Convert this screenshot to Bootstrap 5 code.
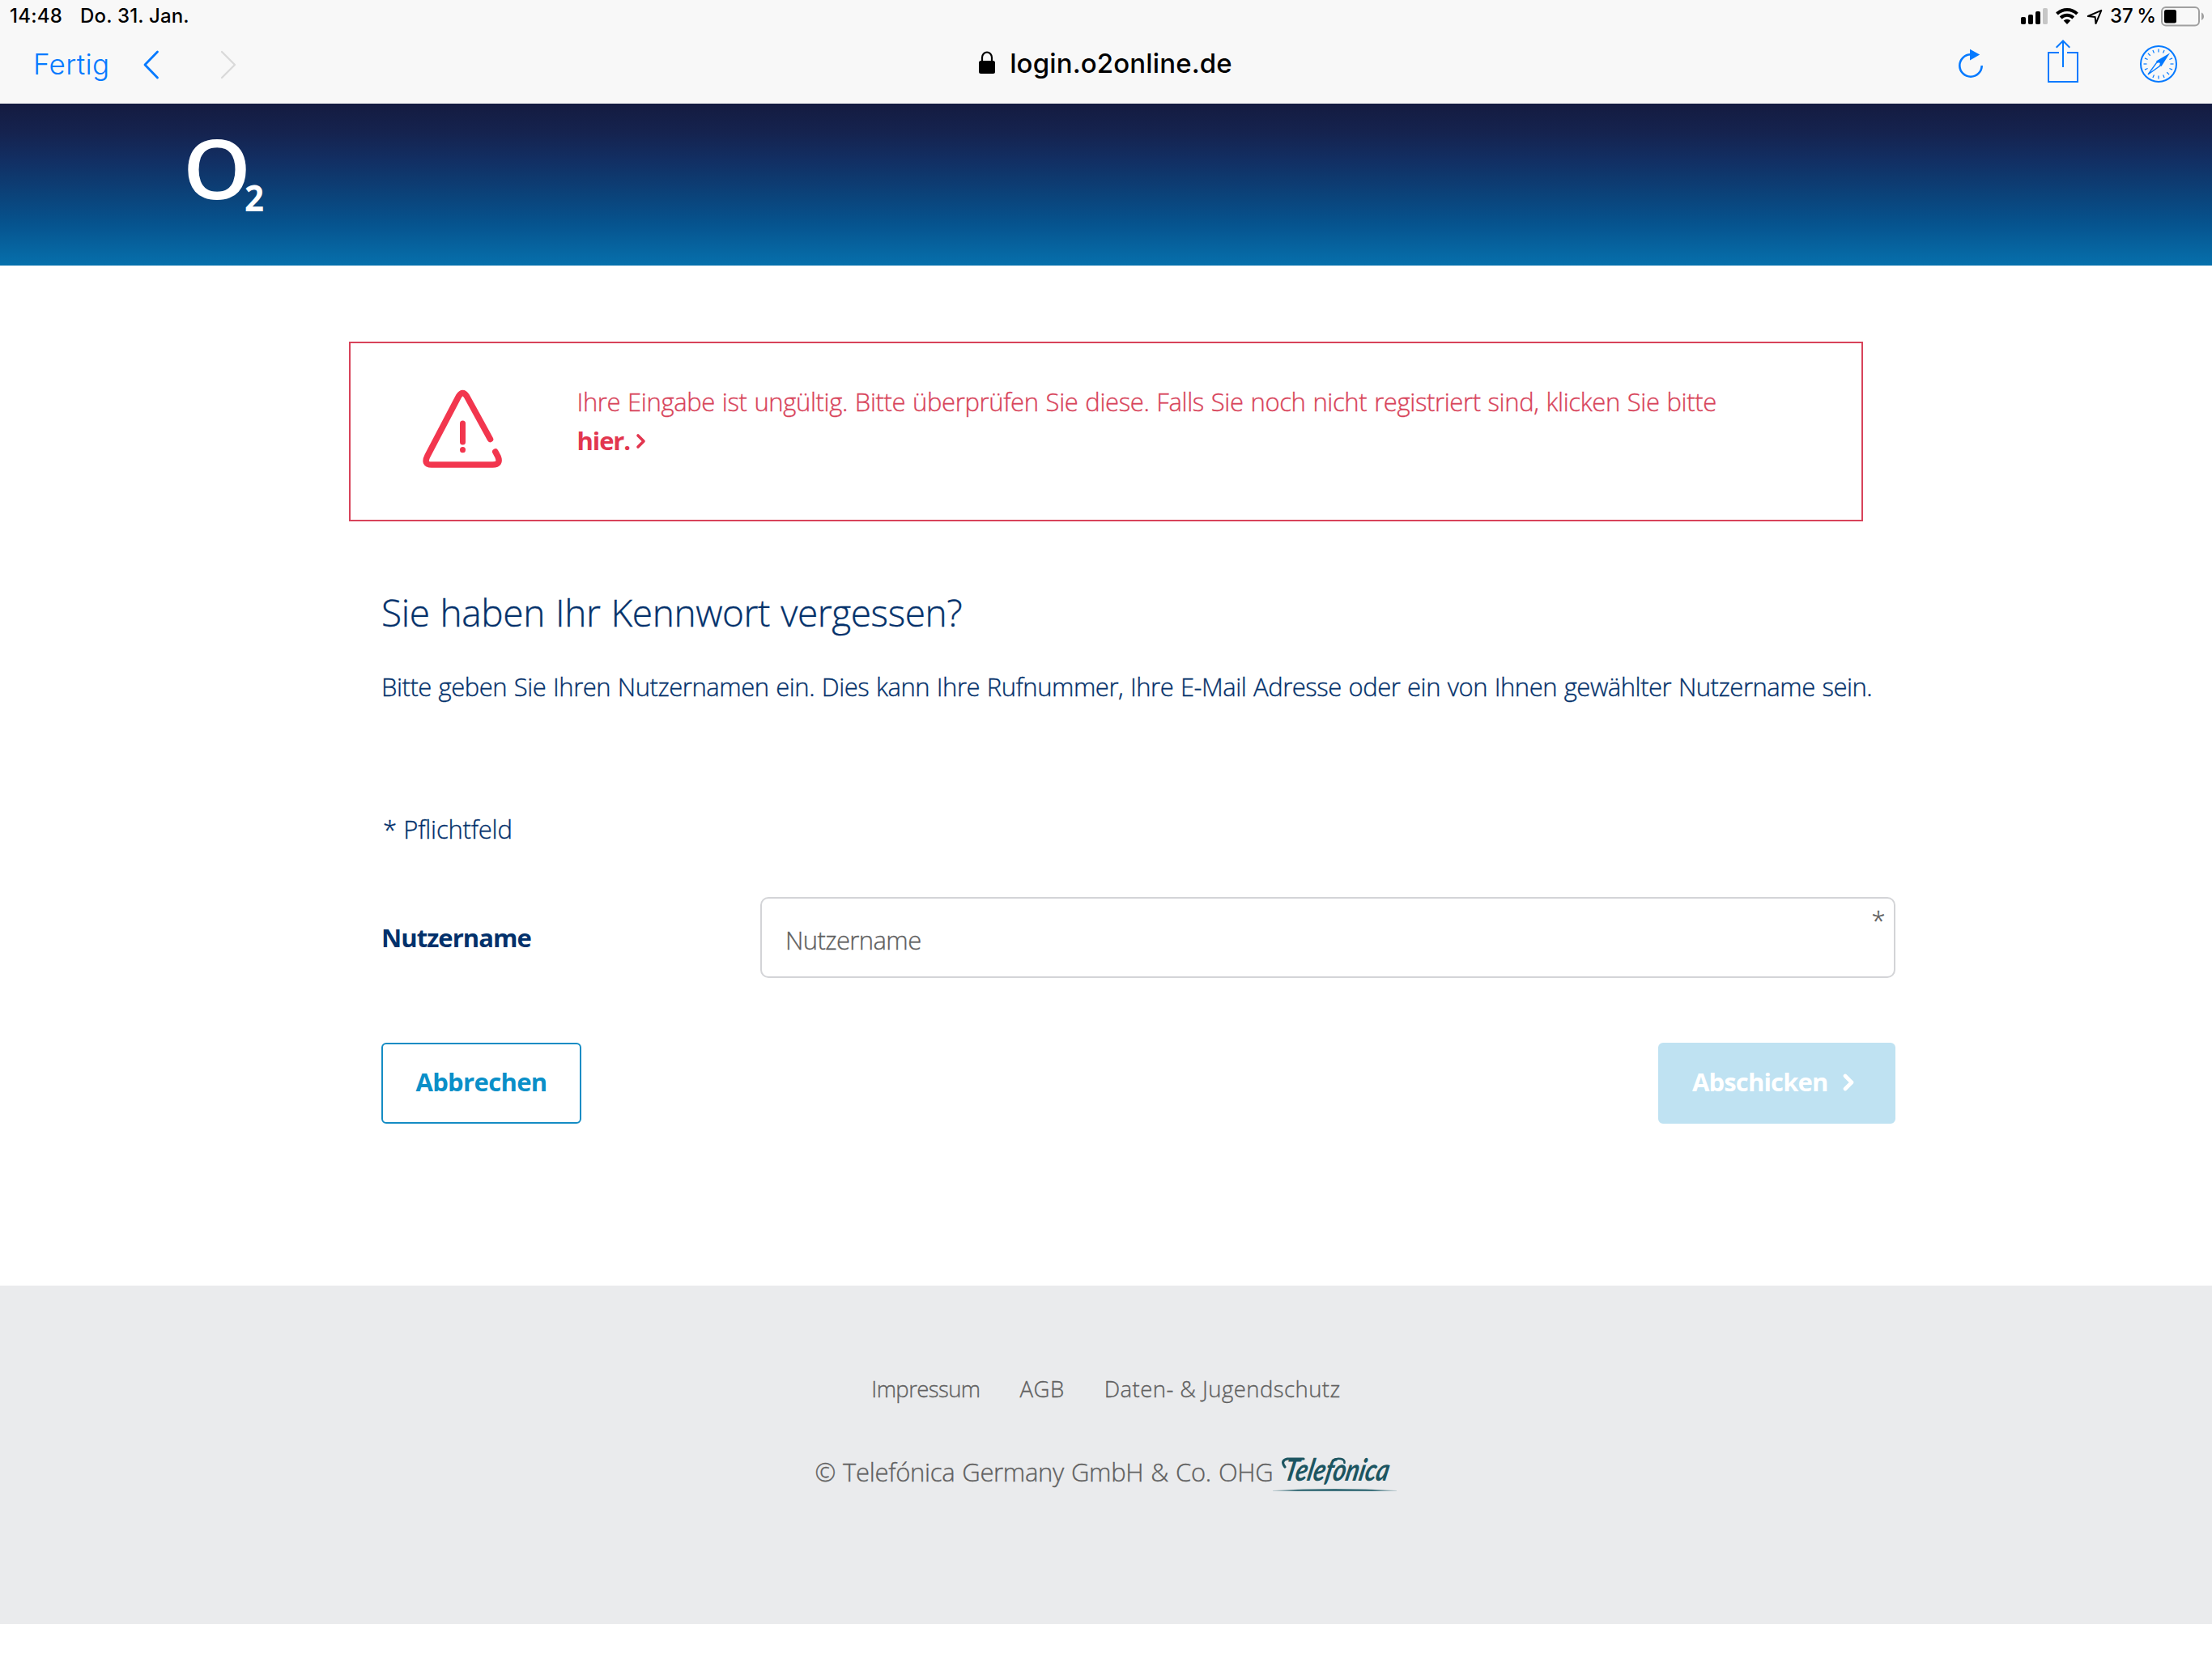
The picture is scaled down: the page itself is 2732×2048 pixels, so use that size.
<!doctype html>
<html lang="de">
<head>
<meta charset="utf-8">
<meta name="viewport" content="width=device-width, initial-scale=1">
<title>o2 Login</title>
<link rel="stylesheet" href="https://cdn.jsdelivr.net/npm/bootstrap@5.3.0/dist/css/bootstrap.min.css">
<style>
  body { background: #fff; color: #03316b; font: 300 31px/48px "Open Sans", "Noto Sans", sans-serif; }
  svg { display: block; flex: none; overflow: visible; }

  .browser-chrome { height: 128px; background: #f8f8f8; color: #000; font-family: Inter, Roboto, sans-serif; }
  .status-bar { height: 39px; padding: 0 10px 0 12px; font-size: 24px; font-weight: 500; line-height: 39px; }
  .status-time { letter-spacing: .25px; }
  .status-date { margin-left: 22px; letter-spacing: .15px; }
  .battery-level { margin: 0 6px 0 9px; word-spacing: -2px; }
  .tool-bar { height: 89px; padding: 0 43px 9px 42px; display: grid; grid-template-columns: 1fr auto 1fr; font-size: 35px; line-height: 40px; }
  .tool-link { color: #067aff; text-decoration: none; letter-spacing: .35px; margin-left: -1px; }
  .page-address { font-size: 33px; font-weight: 500; letter-spacing: .12px; margin: 0 0 2px 18px; }

  .brand-bar { height: 200px; padding: 4px 0 0 226px; background: linear-gradient(#141b40 0, #15234f 18%, #122e62 34%, #0b4279 56%, #06538e 74%, #0670ac 100%); }
  .brand-logo text { fill: #fff; font-family: "Open Sans", sans-serif; }

  .light-text { -webkit-text-stroke: .35px currentColor; }
  .page-main { height: 1260px; padding: 94px 391px 0 431px; }
  .error-box { width: 1870px; height: 222px; border: 2px solid #d8435a; border-radius: 0; color: #d8435a; padding: 48px 80px 0 89px; margin: 0; letter-spacing: -.37px; word-spacing: 1.2px; }
  .error-icon { margin: 9px 92.5px 0 0; }
  .error-link { color: #e2364f; font-weight: 700; letter-spacing: -1.1px; text-decoration: none; -webkit-text-stroke: 0; }

  .form-area { padding-left: 40px; padding-top: 82px; }
  .form-title { font-size: 46px; font-weight: 300; line-height: 60px; letter-spacing: -.4px; word-spacing: 1.5px; margin: 0 0 38px; }
  .form-intro { letter-spacing: -.47px; word-spacing: 1.1px; white-space: nowrap; margin: 0 0 128px; }
  .required-note { letter-spacing: -.2px; word-spacing: .5px; margin: 0 0 60px 2px; }
  .name-label { width: 468px; font-weight: 700; letter-spacing: -.95px; }
  .name-field, .name-field:focus { height: 100px; border: 2px solid #d3d4d7; border-radius: 10px; padding: 6px 29px 0; font-size: 31px; font-weight: 300; letter-spacing: -.6px; }
  .name-field::placeholder { color: #5f5f5f; opacity: 1; }
  .required-star { top: 10px; right: 12.5px; color: #5f5f5f; font-size: 31px; line-height: 36px; }
  .action-row { margin-top: 80px; }
  .btn-form { height: 100px; border-radius: 6px; border-width: 2px; font-size: 31px; font-weight: 700; line-height: 48px; padding: 0 0 4px; letter-spacing: -.65px; }
  .btn-cancel { width: 247px; color: #0a8fc8; border-color: #148cc4; }
  .btn-send, .btn-send:disabled { width: 293px; padding-left: 40px; color: #fff; background: #bfe2f2; border-color: #bfe2f2; opacity: 1; letter-spacing: -.85px; }

  .page-footer { height: 418px; background: #eaebed; color: #606060; padding-top: 108px; }
  .footer-links { gap: 49px; font-size: 27.5px; line-height: 40px; margin-bottom: 58px; }
  .footer-links a { color: #606060; text-decoration: none; }
  .copyright-text { letter-spacing: -.3px; word-spacing: 1.2px; }
</style>
</head>
<body>

<header class="browser-chrome">
  <div class="status-bar d-flex align-items-center">
    <span class="status-time">14:48</span>
    <span class="status-date">Do. 31. Jan.</span>
    <svg class="ms-auto" width="33" height="39" viewBox="0 0 33 39">
      <rect x="0" y="21" width="6" height="9" rx="1.8"/><rect x="9" y="18" width="6" height="12" rx="1.8"/><rect x="18" y="14" width="6" height="16" rx="1.8"/><rect x="27" y="10" width="6" height="20" rx="1.8" fill="#c6c6c6"/>
    </svg>
    <svg style="margin-left:10px" width="28" height="39" viewBox="0 0 28 39" fill="none" stroke="#000" stroke-width="4">
      <path d="M1.5 17.2a17.8 17.8 0 0 1 25 0"/><path d="M6.2 22a11.2 11.2 0 0 1 15.6 0"/><path d="M14 30l-4.3-4.4a6.2 6.2 0 0 1 8.6 0z" fill="#000" stroke="none"/>
    </svg>
    <svg style="margin-left:11px" width="19" height="39" viewBox="0 0 19 39" fill="none" stroke="#000" stroke-width="2" stroke-linejoin="round">
      <path d="M17.3 12.800L.8 20l8.800.900.900 8.200z"/>
    </svg>
    <span class="battery-level">37 %</span>
    <svg width="53" height="39" viewBox="0 0 53 39">
      <rect x="1" y="9" width="46" height="22.5" rx="5" fill="none" stroke="#a0a0a0" stroke-width="2"/>
      <rect x="4" y="12" width="15" height="16.500" rx="2.500"/>
      <path d="M50 15.500q3 1.500 3 4.700t-3 4.700z" fill="#a0a0a0"/>
    </svg>
  </div>
  <div class="tool-bar align-items-center">
    <div class="d-flex align-items-center">
      <a class="tool-link" href="#">Fertig</a>
      <svg style="margin-left:42px" width="20" height="60" viewBox="0 0 20 60" fill="none" stroke="#067aff" stroke-width="2.800" stroke-linecap="round" stroke-linejoin="round"><path d="M17.500 15L2 31l15.500 16"/></svg>
      <svg style="margin-left:75px" width="20" height="60" viewBox="0 0 20 60" fill="none" stroke="#d9d9d9" stroke-width="2.300" stroke-linecap="round" stroke-linejoin="round"><path d="M2 15l16 16L2 47"/></svg>
    </div>
    <div class="d-flex align-items-center">
      <svg width="20" height="60" viewBox="0 0 20 60"><rect y="26" width="20" height="16" rx="2.500"/><path d="M4 27v-5a6 6.500 0 0 1 12 0v5" fill="none" stroke="#000" stroke-width="2.200"/></svg>
      <span class="page-address">login.o2online.de</span>
    </div>
    <div class="d-flex align-items-center justify-content-end">
      <svg width="30" height="60" viewBox="0 0 30 60"><path d="M28.700 32A13.700 13.700 0 1 1 15 18.300" fill="none" stroke="#067aff" stroke-width="2.600"/><path d="M14 11.800l12.200 6.700L14 25.500z" fill="#067aff"/></svg>
      <svg style="margin-left:80px" width="38" height="60" viewBox="0 0 38 60" fill="none" stroke="#067aff" stroke-width="2"><path d="M14 16H1v36h36V16H24M19 34V1.500M10.700 9.800L19 1.500l8.300 8.300"/></svg>
      <svg style="margin-left:76px" width="46" height="60" viewBox="0 0 46 60" fill="none" stroke="#067aff">
        <circle cx="23" cy="30" r="22" stroke-width="2"/>
        <g id="compass-ticks" stroke-width="1.200"></g>
        <path d="M37 16.500L26.500 33 20 26.500z" fill="#067aff" stroke="none"/>
        <path d="M10 43l11.200-15.500 4.300 4.300z" stroke-width="1.300"/>
        <circle cx="23.200" cy="29.800" r="1.600" fill="#f8f8f8" stroke="none"/>
      </svg>
    </div>
  </div>
</header>

<div class="brand-bar">
  <svg class="brand-logo" width="110" height="170" viewBox="0 0 110 170">
    <text x="0" y="114" font-size="101" font-weight="600" textLength="84" lengthAdjust="spacingAndGlyphs">O</text>
    <text x="76" y="129" font-size="44" font-weight="700" textLength="24" lengthAdjust="spacingAndGlyphs">2</text>
  </svg>
</div>

<main class="page-main">
  <div class="error-box alert light-text d-flex align-items-start" role="alert">
    <svg class="error-icon" width="98" height="97" viewBox="0 0 98 97" fill="none" stroke="#f2364e" stroke-width="7.600" stroke-linecap="round" stroke-linejoin="round">
      <path d="M83.500 61.500L54.500 8.500Q49.500.5 44.500 8.500L6 82Q.5 93 11 93h75.500Q97 93 93 83l-3.200-6"/>
      <path d="M49.500 42v23" stroke-width="7"/><path d="M49.500 74.500v.3" stroke-width="7"/>
    </svg>
    <div>
      Ihre Eingabe ist ungültig. Bitte überprüfen Sie diese. Falls Sie noch nicht registriert sind, klicken Sie bitte
      <a class="error-link d-flex align-items-center" href="#">hier.<svg style="margin-left:7px" width="13" height="18" viewBox="0 0 13 18" fill="none" stroke="#e2364f" stroke-width="3.600" stroke-linecap="round" stroke-linejoin="round"><path d="M3 3l7 7-7 7"/></svg></a>
    </div>
  </div>

  <form class="form-area">
    <h1 class="form-title light-text">Sie haben Ihr Kennwort vergessen?</h1>
    <p class="form-intro light-text">Bitte geben Sie Ihren Nutzernamen ein. Dies kann Ihre Rufnummer, Ihre E-Mail Adresse oder ein von Ihnen gewählter Nutzername sein.</p>
    <p class="required-note light-text">* Pflichtfeld</p>
    <div class="d-flex align-items-center">
      <label class="name-label flex-shrink-0" for="username">Nutzername</label>
      <div class="position-relative flex-grow-1">
        <input class="form-control name-field light-text" id="username" type="text" placeholder="Nutzername">
        <span class="required-star light-text position-absolute">*</span>
      </div>
    </div>
    <div class="action-row d-flex justify-content-between">
      <button class="btn btn-form btn-cancel" type="button">Abbrechen</button>
      <button class="btn btn-form btn-send d-flex align-items-center" type="submit" disabled>Abschicken<svg style="margin-left:18.5px" width="14" height="22" viewBox="0 0 14 22" fill="none" stroke="#fff" stroke-width="4.600" stroke-linecap="round" stroke-linejoin="round"><path d="M3 4l8 8-8 8"/></svg></button>
    </div>
  </form>
</main>

<footer class="page-footer light-text">
  <nav class="footer-links d-flex justify-content-center">
    <a href="#" style="letter-spacing:-.6px">Impressum</a>
    <a href="#" style="letter-spacing:.5px">AGB</a>
    <a href="#" style="letter-spacing:.45px">Daten- &amp; Jugendschutz</a>
  </nav>
  <div class="d-flex justify-content-center align-items-start">
    <span class="copyright-text">© Telefónica Germany GmbH &amp; Co. OHG</span>
    <svg style="margin-top:-12px" width="153" height="66" viewBox="0 -12 153 66">
      <defs><linearGradient id="swoosh"><stop offset="0" stop-color="#2c6470" stop-opacity=".2"/><stop offset=".2" stop-color="#2c6470" stop-opacity=".9"/><stop offset=".8" stop-color="#2c6470" stop-opacity=".9"/><stop offset="1" stop-color="#2c6470" stop-opacity=".2"/></linearGradient></defs>
      <text x="20" y="35" fill="#1c5561" transform="skewX(-12)" font-family="Lato" font-style="italic" font-weight="700" font-size="38" textLength="129" lengthAdjust="spacingAndGlyphs">Telefonica</text>
      <g fill="none" stroke="#1c5561" stroke-linecap="round">
        <path d="M15 18q-6-8 3-10h20" stroke-width="3.200"/>
        <path d="M74 10q4-3 10-2 5 1 4.500 5" stroke-width="2.600"/>
      </g>
      <path d="M0 47q76-4 153 0v1H0z" fill="url(#swoosh)"/>
    </svg>
  </div>
</footer>

<script src="https://cdn.jsdelivr.net/npm/bootstrap@5.3.0/dist/js/bootstrap.bundle.min.js"></script>
<script>
  const ticks = document.getElementById('compass-ticks');
  for (let i = 0; i < 16; i++) {
    if (i === 2 || i === 10) continue;
    const t = document.createElementNS('http://www.w3.org/2000/svg', 'path');
    t.setAttribute('d', 'M23 11.500v4');
    t.setAttribute('transform', `rotate(${i * 22.5} 23 30)`);
    ticks.append(t);
  }
</script>
</body>
</html>
